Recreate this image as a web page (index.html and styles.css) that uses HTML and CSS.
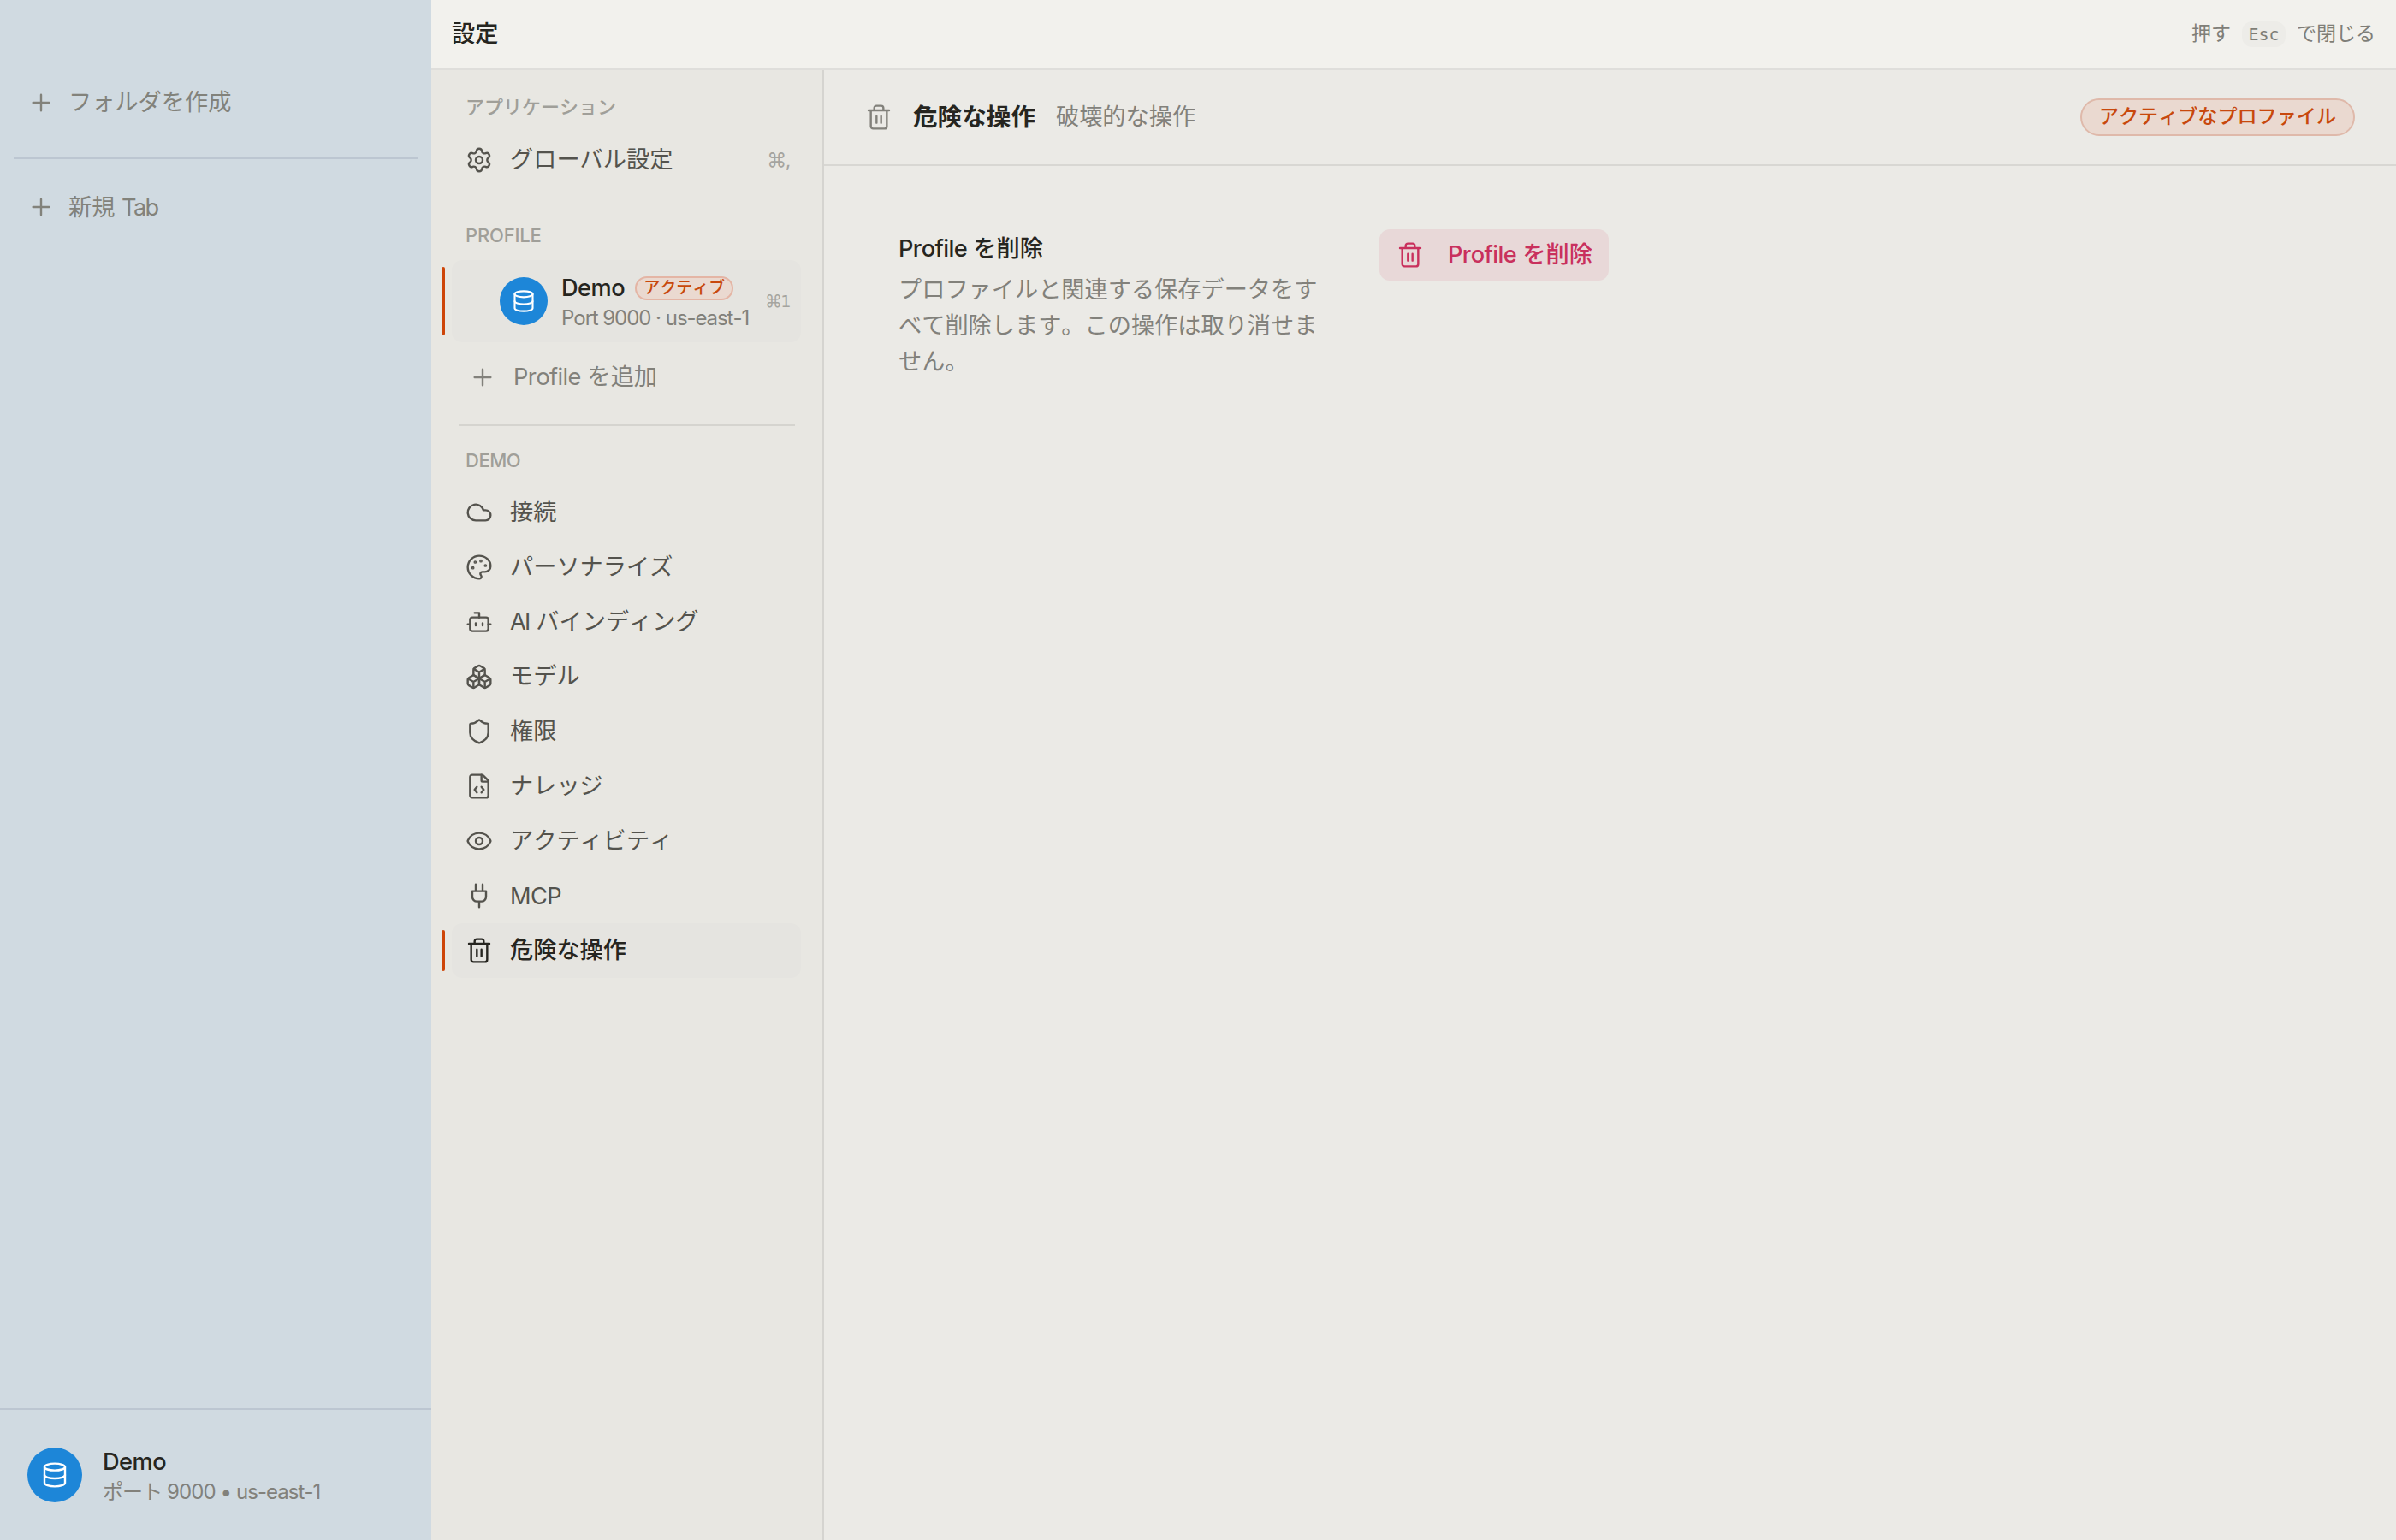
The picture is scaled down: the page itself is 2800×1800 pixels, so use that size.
FILE: index.html
```
<!DOCTYPE html>
<html lang="ja">
<head>
<meta charset="utf-8">
<title>設定</title>
<link rel="stylesheet" href="styles.css">
</head>
<body>
<svg class="sprite" width="0" height="0">
  <symbol id="plus" viewBox="0 0 24 24"><path d="M5 12h14M12 5v14"/></symbol>
  <symbol id="database" viewBox="0 0 24 24"><ellipse cx="12" cy="5" rx="9" ry="3"/><path d="M3 5v14a9 3 0 0 0 18 0V5"/><path d="M3 12a9 3 0 0 0 18 0"/></symbol>
  <symbol id="gear" viewBox="0 0 24 24"><path d="M9.671 4.136a2.34 2.34 0 0 1 4.659 0 2.34 2.34 0 0 0 3.319 1.915 2.34 2.34 0 0 1 2.33 4.033 2.34 2.34 0 0 0 0 3.831 2.34 2.34 0 0 1-2.33 4.033 2.34 2.34 0 0 0-3.319 1.915 2.34 2.34 0 0 1-4.659 0 2.34 2.34 0 0 0-3.32-1.915 2.34 2.34 0 0 1-2.33-4.033 2.34 2.34 0 0 0 0-3.831A2.34 2.34 0 0 1 6.35 6.051a2.34 2.34 0 0 0 3.319-1.915"/><circle cx="12" cy="12" r="3"/></symbol>
  <symbol id="cloud" viewBox="0 0 24 24"><path d="M17.5 19H9a7 7 0 1 1 6.71-9h1.79a4.5 4.5 0 1 1 0 9Z"/></symbol>
  <symbol id="palette" viewBox="0 0 24 24"><path d="M12 22a1 1 0 0 1 0-20 10 9 0 0 1 10 9 5 5 0 0 1-5 5h-2.25a1.75 1.75 0 0 0-1.4 2.8l.3.4a1.75 1.75 0 0 1-1.4 2.8z"/><circle cx="13.5" cy="6.5" r=".5" fill="currentColor"/><circle cx="17.5" cy="10.5" r=".5" fill="currentColor"/><circle cx="6.5" cy="12.5" r=".5" fill="currentColor"/><circle cx="8.5" cy="7.5" r=".5" fill="currentColor"/></symbol>
  <symbol id="bot" viewBox="0 0 24 24"><path d="M12 8V4H8"/><rect x="4" y="8" width="16" height="12" rx="2"/><path d="M2 14h2M20 14h2M15 13v2M9 13v2"/></symbol>
  <symbol id="boxes" viewBox="0 0 24 24"><path d="M2.97 12.92A2 2 0 0 0 2 14.63v3.24a2 2 0 0 0 .97 1.71l3 1.8a2 2 0 0 0 2.06 0L12 19v-5.5l-5-3-4.03 2.42Z"/><path d="m7 16.5-4.74-2.85M7 16.5l5-3M7 16.5v5.17"/><path d="M12 13.5V19l3.97 2.38a2 2 0 0 0 2.06 0l3-1.8a2 2 0 0 0 .97-1.71v-3.24a2 2 0 0 0-.97-1.71L17 10.5l-5 3Z"/><path d="m17 16.5-5-3M17 16.5l4.74-2.85M17 16.5v5.17"/><path d="M7.97 4.42A2 2 0 0 0 7 6.13v4.37l5 3 5-3V6.13a2 2 0 0 0-.97-1.71l-3-1.8a2 2 0 0 0-2.06 0l-3 1.8Z"/><path d="M12 8 7.26 5.15M12 8l4.74-2.85M12 13.5V8"/></symbol>
  <symbol id="shield" viewBox="0 0 24 24"><path d="M20 13c0 5-3.5 7.5-7.66 8.95a1 1 0 0 1-.67-.01C7.5 20.5 4 18 4 13V6a1 1 0 0 1 1-1c2 0 4.5-1.2 6.24-2.72a1.17 1.17 0 0 1 1.52 0C14.51 3.81 17 5 19 5a1 1 0 0 1 1 1z"/></symbol>
  <symbol id="file-code" viewBox="0 0 24 24"><path d="M6 22a2 2 0 0 1-2-2V4a2 2 0 0 1 2-2h8a2.4 2.4 0 0 1 1.704.706l3.588 3.588A2.4 2.4 0 0 1 20 8v12a2 2 0 0 1-2 2z"/><path d="M14 2v5a1 1 0 0 0 1 1h5"/><path d="M10 12.5 8 15l2 2.5M14 12.5l2 2.5-2 2.5"/></symbol>
  <symbol id="eye" viewBox="0 0 24 24"><path d="M2.062 12.348a1 1 0 0 1 0-.696 10.75 10.75 0 0 1 19.876 0 1 1 0 0 1 0 .696 10.75 10.75 0 0 1-19.876 0"/><circle cx="12" cy="12" r="3"/></symbol>
  <symbol id="plug" viewBox="0 0 24 24"><path d="M12 22v-5M9 8V2M15 8V2M18 8v5a4 4 0 0 1-4 4h-4a4 4 0 0 1-4-4V8Z"/></symbol>
  <symbol id="trash" viewBox="0 0 24 24"><path d="M3 6h18M19 6v14a2 2 0 0 1-2 2H7a2 2 0 0 1-2-2V6M8 6V4a2 2 0 0 1 2-2h4a2 2 0 0 1 2 2v2M10 11v6M14 11v6"/></symbol>
</svg>
<div class="app">
  <aside class="sidebar">
    <div class="side-row folder"><svg class="icon"><use href="#plus"/></svg><span>フォルダを作成</span></div>
    <div class="side-divider"></div>
    <div class="side-row tab"><svg class="icon"><use href="#plus"/></svg><span>新規 <span class="latin">Tab</span></span></div>
    <div class="account">
      <div class="avatar large"><svg class="icon"><use href="#database"/></svg></div>
      <div class="account-text"><span class="name">Demo</span><span class="meta">ポート 9000 • us-east-1</span></div>
    </div>
  </aside>
  <section class="settings">
    <header class="topbar">
      <h1 class="title">設定</h1>
      <div class="hint"><span>押す</span><kbd>Esc</kbd><span>で閉じる</span></div>
    </header>
    <div class="columns">
      <nav class="nav">
        <div class="nav-label app-label">アプリケーション</div>
        <div class="nav-item"><svg class="icon"><use href="#gear"/></svg><span>グローバル設定</span><span class="shortcut">⌘,</span></div>
        <div class="nav-label profile-label">PROFILE</div>
        <div class="profile active">
          <div class="avatar"><svg class="icon"><use href="#database"/></svg></div>
          <div class="profile-text">
            <div class="profile-line"><span class="name">Demo</span><span class="badge small">アクティブ</span></div>
            <span class="meta port">Port 9000 · us-east-1</span>
          </div>
          <span class="shortcut mono"><span class="cmd">⌘</span>1</span>
        </div>
        <div class="add-profile"><svg class="icon"><use href="#plus"/></svg><span><span class="word">Profile</span> を追加</span></div>
        <div class="nav-divider"></div>
        <div class="nav-label demo-label">DEMO</div>
        <div class="nav-item"><svg class="icon"><use href="#cloud"/></svg><span>接続</span></div>
        <div class="nav-item"><svg class="icon"><use href="#palette"/></svg><span>パーソナライズ</span></div>
        <div class="nav-item"><svg class="icon"><use href="#bot"/></svg><span><span class="latin">AI</span> バインディング</span></div>
        <div class="nav-item"><svg class="icon"><use href="#boxes"/></svg><span>モデル</span></div>
        <div class="nav-item"><svg class="icon"><use href="#shield"/></svg><span>権限</span></div>
        <div class="nav-item"><svg class="icon"><use href="#file-code"/></svg><span>ナレッジ</span></div>
        <div class="nav-item"><svg class="icon"><use href="#eye"/></svg><span>アクティビティ</span></div>
        <div class="nav-item"><svg class="icon"><use href="#plug"/></svg><span class="word lowered">MCP</span></div>
        <div class="nav-item active"><svg class="icon"><use href="#trash"/></svg><span>危険な操作</span></div>
      </nav>
      <main class="main">
        <header class="section-head">
          <svg class="icon"><use href="#trash"/></svg>
          <h2 class="section-title">危険な操作</h2>
          <span class="section-sub">破壊的な操作</span>
          <span class="badge">アクティブなプロファイル</span>
        </header>
        <div class="setting">
          <div class="setting-text">
            <h3 class="setting-title"><span class="word">Profile</span> を削除</h3>
            <p class="setting-desc">プロファイルと関連する保存データをすべて削除します。この操作は取り消せません。</p>
          </div>
          <button class="danger" type="button"><svg class="icon"><use href="#trash"/></svg><span><span class="word">Profile</span> を削除</span></button>
        </div>
      </main>
    </div>
  </section>
</div>
</body>
</html>
```
FILE: styles.css
```
* { box-sizing: border-box; }
body { margin: 0; font-family: Inter, "Noto Sans CJK JP", sans-serif; font-size: 27.2px; font-kerning: none; line-height: 40px; color: #262520; white-space: nowrap; }
h1, h2, h3, p { margin: 0; font-size: inherit; }
.sprite { display: none; }
.app { display: flex; width: 2800px; height: 1800px; overflow: hidden; }
.icon { display: block; flex: none; width: 32px; height: 32px; fill: none; stroke: currentColor; stroke-width: 1.8; stroke-linecap: round; stroke-linejoin: round; }
.latin { font-kerning: normal; letter-spacing: -1.7px; }
.word { letter-spacing: -0.6px; }

.sidebar { display: flex; flex-direction: column; flex: none; width: 504px; background: #d0dae1; color: #82827b; }
.side-row { display: flex; align-items: center; gap: 16px; height: 64px; padding-left: 32px; }
.folder { margin-top: 88px; }
.tab { margin-top: 24px; }
.tab > span { padding-top: 1px; }
.side-divider { height: 2px; margin: 32px 16px 0; background: #bcc6d1; }
.account { display: flex; align-items: center; gap: 24px; height: 154px; margin-top: auto; padding-left: 32px; border-top: 2px solid #bcc6d1; }
.account-text { display: flex; flex-direction: column; padding-top: 4px; }
.name { color: #262520; font-weight: 500; line-height: 36px; letter-spacing: -0.5px; }
.meta { color: #82817b; font-size: 24px; line-height: 34px; letter-spacing: -0.92px; }
.port { letter-spacing: -1.03px; }
.avatar { display: grid; place-items: center; flex: none; width: 56px; height: 56px; border-radius: 50%; background: #1d86d8; color: #fff; }
.avatar .icon { width: 28px; height: 28px; }
.avatar.large { width: 64px; height: 64px; }
.avatar.large .icon { width: 32px; height: 32px; }

.settings { display: flex; flex-direction: column; flex: 1; }
.topbar { display: flex; align-items: center; justify-content: space-between; height: 82px; padding: 0 24px; border-bottom: 2px solid #dfdedb; background: #f2f1ed; }
.title { font-weight: 500; }
.hint { display: flex; align-items: center; gap: 13px; color: #7f7e78; font-size: 23px; }
.hint span { padding-bottom: 2px; }
kbd { width: 51px; height: 30px; border-radius: 12px; background: #edece8; font: 20px/30px "DejaVu Sans Mono", monospace; text-align: center; }
.columns { display: flex; flex: 1; }
.nav { flex: none; width: 459px; padding: 0 25px 0 24px; border-right: 2px solid #d5d4d0; background: #e8e7e2; color: #54534d; }
.nav-label { height: 32px; padding-left: 16px; color: #a09f99; font-size: 22px; font-weight: 500; line-height: 32px; }
.app-label { margin: 27px 0 14px; }
.profile-label { margin: 40px 0 13px; letter-spacing: -0.2px; }
.demo-label { margin: 24px 0 13px; letter-spacing: -0.5px; }
.nav-item { position: relative; display: flex; align-items: center; gap: 20px; height: 64px; padding: 0 13px 0 16px; border-radius: 12px; }
.nav-item .lowered { padding-top: 2px; }
.nav-item.active { background: #e5e4e0; color: #262520; font-weight: 500; }
.profile { position: relative; display: flex; align-items: center; gap: 16px; height: 96px; padding: 0 12px 0 56px; border-radius: 12px; background: #e5e4e0; }
.active::before { content: ""; position: absolute; left: -12px; top: 8px; bottom: 8px; width: 4px; border-radius: 2px; background: #ce4508; }
.profile-line { display: flex; align-items: center; gap: 12px; height: 36px; }
.profile-text { display: flex; flex-direction: column; padding-top: 3px; }
.shortcut { margin-left: auto; color: #a5a49f; font-size: 23px; letter-spacing: -1.5px; }
.mono { font-family: "DejaVu Sans Mono", monospace; font-size: 20px; letter-spacing: 0; }
.cmd { font-family: Inter, "DejaVu Sans", sans-serif; font-size: 20px; letter-spacing: -2px; }
.badge { display: inline-flex; align-items: center; height: 44px; margin-left: auto; padding: 0 20px 2px; border: 2px solid #dfb9aa; border-radius: 22px; background: #ead9d0; color: #c8480c; font-size: 23.1px; font-weight: 500; }
.badge.small { height: 28px; margin: 0; padding: 0 8px; border-color: #e4b5a5; font-size: 19px; }
.add-profile { display: flex; align-items: center; gap: 20px; height: 64px; margin-top: 8px; padding: 1px 0 0 20px; color: #82817b; }
.nav-divider { height: 2px; margin: 24px 7px 0 8px; background: #d5d4cf; }

.main { flex: 1; background: #ebeae6; }
.section-head { display: flex; align-items: center; height: 112px; padding: 0 48px; border-bottom: 2px solid #d8d7d3; color: #82817b; }
.section-title { margin: 0 24px; color: #262520; font-size: 28.6px; font-weight: 700; }
.setting { display: grid; grid-template-columns: 502px auto; justify-content: start; align-items: start; column-gap: 60px; padding: 74px 0 0 87px; }
.setting-title { padding-top: 1px; font-weight: 500; line-height: 44px; }
.setting-desc { padding-top: 5px; color: #82817b; line-height: 42px; white-space: normal; }
.danger { display: flex; align-items: center; gap: 28px; height: 60px; padding: 0 19px 0 20px; border: 0; border-radius: 12px; background: #e8d8d8; color: #c9305d; font: inherit; font-weight: 500; }
```
